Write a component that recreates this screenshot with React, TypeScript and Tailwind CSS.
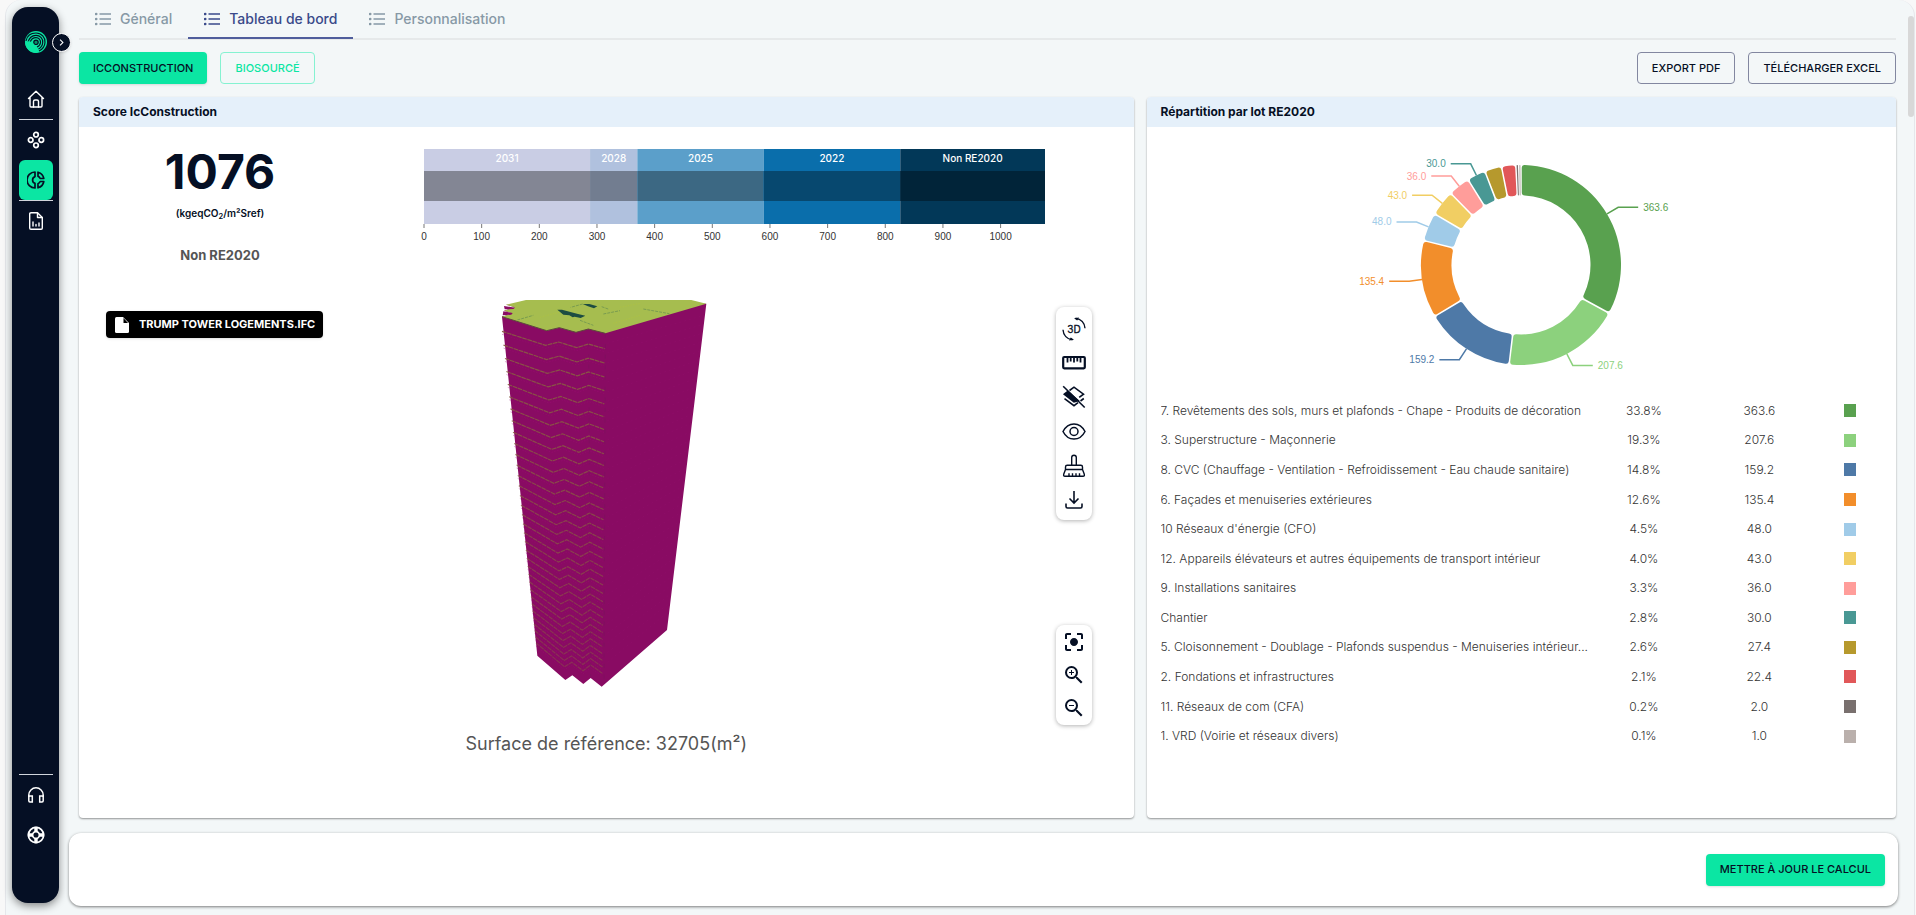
/**
 * Carbon dashboard - IcConstruction score, model viewer and RE2020 breakdown
 */

import { ReactNode } from 'react';
import clsx from 'clsx';
import { MdCenterFocusStrong, MdChevronRight, MdZoomIn, MdZoomOut } from 'react-icons/md';

interface Lot {
  name: string;
  percent: string;
  value: number;
  color: string;
}

const lots: Lot[] = [
  { name: '7. Revêtements des sols, murs et plafonds - Chape - Produits de décoration', percent: '33.8%', value: 363.6, color: '#59a14f' },
  { name: '3. Superstructure - Maçonnerie', percent: '19.3%', value: 207.6, color: '#8cd17d' },
  { name: '8. CVC (Chauffage - Ventilation - Refroidissement - Eau chaude sanitaire)', percent: '14.8%', value: 159.2, color: '#4e79a7' },
  { name: '6. Façades et menuiseries extérieures', percent: '12.6%', value: 135.4, color: '#f28e2b' },
  { name: "10 Réseaux d'énergie (CFO)", percent: '4.5%', value: 48, color: '#a0cbe8' },
  { name: '12. Appareils élévateurs et autres équipements de transport intérieur', percent: '4.0%', value: 43, color: '#f1ce63' },
  { name: '9. Installations sanitaires', percent: '3.3%', value: 36, color: '#ff9d9a' },
  { name: 'Chantier', percent: '2.8%', value: 30, color: '#499894' },
  { name: '5. Cloisonnement - Doublage - Plafonds suspendus - Menuiseries intérieur...', percent: '2.6%', value: 27.4, color: '#b6992d' },
  { name: '2. Fondations et infrastructures', percent: '2.1%', value: 22.4, color: '#e15759' },
  { name: '11. Réseaux de com (CFA)', percent: '0.2%', value: 2, color: '#79706e' },
  { name: '1. VRD (Voirie et réseaux divers)', percent: '0.1%', value: 1, color: '#bab0ac' },
];

const thresholds = [
  { label: '2031', from: 0, to: 288, color: '#c9cde4', dark: '#838694' },
  { label: '2028', from: 288, to: 370, color: '#b0c1de', dark: '#727d90' },
  { label: '2025', from: 370, to: 589, color: '#5b9fca', dark: '#3c6883' },
  { label: '2022', from: 589, to: 826, color: '#0a6eab', dark: '#07486f' },
  { label: 'Non RE2020', from: 826, to: 1077, color: '#023858', dark: '#012439' },
];

const ticks = [0, 100, 200, 300, 400, 500, 600, 700, 800, 900, 1000];

// ---------- Sidebar icons ----------

function LogoIcon() {
  return (
    <svg viewBox="0 0 22 22" className="size-[22px]">
      <circle cx="11" cy="11" r="11" fill="#0be6a3" />
      <g fill="none" stroke="#050f24" strokeWidth="1.2">
        <path d="M1 10C2 5 6 2 11 2c5.500 0 9.500 4.500 9 9.500-.3 4-2.800 7-6 8.500" />
        <path d="M3 11.500C4 7 7 4.300 11 4.300c4 0 7 3.200 6.700 7.200-.2 3-2 5.300-4.200 6.500" />
        <path d="M5 11.500C6 8.500 8 6.700 11 6.700c2.800 0 4.700 2.100 4.500 4.800-.2 2-1.500 3.700-3.500 4.500" />
        <circle cx="11" cy="11.300" r="2.200" fill="#0a8f6a" />
      </g>
      <path d="M.2 12c2.500-2.500 5.800-2 7.800.3 2 2.400 4.800 3.700 4.500 9.500C6 22.500.7 18 .2 12z" fill="#0be6a3" />
    </svg>
  );
}

function HomeIcon() {
  return (
    <svg viewBox="0 0 18 18" className="size-[18px]" fill="none" stroke="currentColor" strokeWidth="1.4" strokeLinejoin="round" strokeLinecap="round">
      <path d="M1.500 8.500 9 1.200l7.500 7.300M3 7.500V16q0 1 1 1h10q1 0 1-1V7.500" />
      <path d="M6.500 17v-5.500q0-1.500 1.500-1.500h2q1.500 0 1.500 1.500V17" />
    </svg>
  );
}

function ComponentsIcon() {
  return (
    <svg viewBox="0 0 18 18" className="size-[18px]" fill="none" stroke="currentColor" strokeWidth="1.700">
      <circle cx="9" cy="3.700" r="2.300" />
      <circle cx="3.700" cy="9" r="2.300" />
      <circle cx="14.300" cy="9" r="2.300" />
      <circle cx="9" cy="14.300" r="2.300" />
    </svg>
  );
}

function DonutIcon() {
  return (
    <svg viewBox="0 0 18 18" className="size-[18px]" fill="none" stroke="currentColor" strokeWidth="1.700" strokeLinejoin="round">
      <path d="M8 1v4.600a3.600 3.600 0 0 0 0 6.800V17A8 8 0 0 1 8 1z" />
      <path d="M11 1.200A8 8 0 0 1 16.800 7.500h-3.600A4.500 4.500 0 0 0 11 5.300z" />
      <path d="M11 16.800a8 8 0 0 0 5.800-6.300h-3.600a4.500 4.500 0 0 1-2.200 2.200z" />
    </svg>
  );
}

function ReportIcon() {
  return (
    <svg viewBox="0 0 18 18" className="size-[18px]" fill="none" stroke="currentColor" strokeWidth="1.400" strokeLinejoin="round" strokeLinecap="round">
      <path d="M4 .8h6.500L15.300 5.500V16q0 1.200-1.200 1.200H4q-1.300 0-1.300-1.200V2Q2.700.8 4 .8z" />
      <path d="M10.500 1v4.500h4.600M6 10v4M9 12.500V14M12 11v3" />
    </svg>
  );
}

function HeadsetIcon() {
  return (
    <svg viewBox="0 0 18 18" className="size-[18px]" fill="none" stroke="currentColor" strokeWidth="1.500">
      <path d="M1.800 11V9a7.200 7.200 0 0 1 14.400 0v2" />
      <path d="M1.800 10h3.500v6H3q-1.200 0-1.200-1.200zM16.200 10h-3.500v6H15q1.200 0 1.200-1.200z" />
    </svg>
  );
}

function SupportIcon() {
  return (
    <svg viewBox="0 0 18 18" className="size-[18px]" fill="none" stroke="currentColor">
      <circle cx="9" cy="9" r="7.600" strokeWidth="1.800" />
      <circle cx="9" cy="9" r="3.400" strokeWidth="1.700" />
      <path d="M9 .8v5M9 12.200v5M.8 9h5M12.200 9h5" strokeWidth="3.400" />
    </svg>
  );
}

// ---------- Viewer icons ----------

function RotateIcon() {
  return (
    <svg viewBox="0 0 24 24" className="size-6" fill="none" stroke="#050f24" strokeWidth="1.400">
      <path d="M13.500 1.200C19 2 22.700 6 23 11.300M10.500 22.800C5 22 1.300 18 1 12.700" />
      <path d="m12 1.200 5-.6-1.800 3zM12 22.800l-5 .6 1.800-3z" fill="#050f24" stroke="none" />
      <text x="12" y="16" textAnchor="middle" fontSize="10" fill="#050f24" stroke="#050f24" strokeWidth=".3">3D</text>
    </svg>
  );
}

function RulerIcon() {
  return (
    <svg viewBox="0 0 24 24" className="size-6" fill="none" stroke="#050f24" strokeWidth="1.800">
      <rect x="1.200" y="6" width="21.600" height="11.300" rx="1" strokeWidth="2.200" />
      <path d="M5.500 6v5.500M8.700 6v4.500M12 6v5.500M15.300 6v4.500M18.500 6v5.500" />
    </svg>
  );
}

function LayersOffIcon() {
  return (
    <svg viewBox="0 0 24 24" className="size-6" fill="none" stroke="#050f24" strokeWidth="1.600">
      <path d="m7.500 5.500 4.500-3.300 9.500 7-4.300 3.200M2.500 13.700 12 20.700l4-3M18.500 16l3.300-2.500" />
      <path d="m2.300 9.200 3.400-2.600 10.500 9-4.200 1.200z" fill="#050f24" />
      <path d="m1.200 1.200 21.500 21.300" />
    </svg>
  );
}

function EyeIcon() {
  return (
    <svg viewBox="0 0 24 24" className="size-6" fill="none" stroke="#050f24" strokeWidth="1.500">
      <path d="M1 12.500c2.500-4.900 6.300-7.600 11-7.600s8.500 2.700 11 7.600c-2.500 4.900-6.300 7.600-11 7.600S3.500 17.400 1 12.500z" />
      <circle cx="12" cy="12.500" r="4" />
    </svg>
  );
}

function BroomIcon() {
  return (
    <svg viewBox="0 0 24 24" className="size-6" fill="none" stroke="#050f24" strokeWidth="1.400" strokeLinejoin="round">
      <path d="M9.700 12V4.500a2.300 2.300 0 0 1 4.600 0V12" />
      <path d="M3.500 16.500V14q0-1.700 1.700-1.700h13.600q1.700 0 1.700 1.700v2.500zM3.500 16.500 1.700 21.300q-.4 2 1.300 2h18q1.700 0 1.300-2l-1.800-4.800" />
      <path d="M7 23.300v-3M10.500 23.300v-3M14 23.300v-3M17.500 23.300v-3" />
    </svg>
  );
}

function DownloadIcon() {
  return (
    <svg viewBox="0 0 24 24" className="size-6" fill="none" stroke="#050f24" strokeWidth="1.600">
      <path d="M12 4v12M7.500 11.500l4.500 4.500 4.500-4.500M4 16.500v3Q4 21 5.500 21h13q1.500 0 1.500-1.500v-3" />
    </svg>
  );
}

function ListIcon() {
  return (
    <svg viewBox="0 0 16 14" className="h-[14px] w-4" stroke="currentColor" strokeWidth="1.300" fill="currentColor">
      <path d="M4.500 2H16M4.500 7H16M4.500 12H16" />
      <circle cx="1.200" cy="2" r=".7" />
      <circle cx="1.200" cy="7" r=".7" />
      <circle cx="1.200" cy="12" r=".7" />
    </svg>
  );
}

// ---------- Layout pieces ----------

function NavItem({ label, active, children }: { label: string; active?: boolean; children: ReactNode }) {
  return (
    <a
      href="#"
      aria-label={label}
      className={clsx(
        'flex h-10 w-[34px] items-center justify-center rounded-md',
        active ? 'bg-[#0be6a3] text-[#050f24]' : 'text-white'
      )}
    >
      {children}
    </a>
  );
}

function Sidebar() {
  return (
    <aside className="relative mt-[7px] mb-3 flex w-[47px] shrink-0 flex-col items-center rounded-2xl bg-[#050f24] pt-6 pb-12 shadow-[0_3px_8px_rgba(0,0,0,0.45)]">
      <LogoIcon />
      <button
        aria-label="Ouvrir le menu"
        className="absolute top-[26px] -right-3 flex size-[19px] items-center justify-center rounded-full border border-white bg-[#050f24] text-white shadow"
      >
        <MdChevronRight size={13} />
      </button>
      <nav className="mt-5 flex flex-1 flex-col items-center">
        <div className="border-b border-gray-300 pt-[6px]">
          <NavItem label="Accueil"><HomeIcon /></NavItem>
        </div>
        <NavItem label="Composants"><ComponentsIcon /></NavItem>
        <div className="border-b border-gray-300">
          <NavItem label="Tableau de bord" active><DonutIcon /></NavItem>
        </div>
        <NavItem label="Rapport"><ReportIcon /></NavItem>
        <div className="mt-auto border-t border-gray-300">
          <NavItem label="Assistance"><HeadsetIcon /></NavItem>
          <NavItem label="Aide"><SupportIcon /></NavItem>
        </div>
      </nav>
    </aside>
  );
}

function Tab({ label, active }: { label: string; active?: boolean }) {
  return (
    <button
      role="tab"
      aria-selected={!!active}
      className={clsx(
        '-mb-[2px] flex h-[39px] items-center gap-[9px] border-b-2 px-4 text-sm font-medium',
        active ? 'border-[#4f5d9c] text-[#3a4a8a]' : 'border-transparent text-[#8799a6]'
      )}
    >
      <ListIcon />
      {label}
    </button>
  );
}

function Card({ title, className, children }: { title: string; className?: string; children: ReactNode }) {
  return (
    <section className={clsx('flex flex-col overflow-hidden rounded bg-white shadow-[0_1px_2px_rgba(0,0,0,0.4)]', className)}>
      <h2 className="h-[30px] bg-[#e5f0fa] px-[14px] text-xs leading-[30px] font-bold text-[#050f24]">{title}</h2>
      {children}
    </section>
  );
}

function ThresholdChart() {
  const x = (v: number) => 10 + v * 0.5766;

  return (
    <svg viewBox="0 0 641 100" className="h-[100px] w-[641px] shrink-0">
      {thresholds.map((t) => (
        <g key={t.label}>
          <rect x={x(t.from)} y="0" width={x(t.to) - x(t.from)} height="75" fill={t.color} />
          <rect x={x(t.from)} y="22" width={x(t.to) - x(t.from)} height="30" fill={t.dark} />
          <text x={x((t.from + t.to) / 2)} y="13" textAnchor="middle" fontSize="10" fontWeight="500" fill="#fff">
            {t.label}
          </text>
        </g>
      ))}
      {ticks.map((t) => (
        <g key={t}>
          <path d={`M${x(t)} 75v4`} stroke="#777" />
          <text x={x(t)} y="91" textAnchor="middle" className="font-['Liberation_Sans',sans-serif]" fontSize="10" fill="#333">
            {t}
          </text>
        </g>
      ))}
    </svg>
  );
}

// Floor lines of the tower: start on the roof edge, get closer towards the ground
const topEdge = [[66, 154], [197, 196], [236, 186], [290, 203], [325, 192], [374, 206]];
const bottomEdge = [[172, 1127], [256, 1200], [277, 1186], [310, 1212], [332, 1194], [367, 1220]];

const floors = Array.from({ length: 34 }, (_, i) => {
  const s = (43 * (1 - Math.pow(0.975, i))) / 0.025 / 1014;
  return topEdge
    .map(([x, y], k) => `${(x + (bottomEdge[k][0] - x) * s).toFixed(1)},${(y + (bottomEdge[k][1] - y) * s).toFixed(1)}`)
    .join(' ');
});

function Tower() {
  return (
    <svg viewBox="60 60 624 1164" className="mx-auto h-[388px] w-[208px]">
      <path
        d="M78 74 105 82 72 92 98 100 66 110 172 1127 256 1200 277 1186 310 1212 332 1194 365 1220 561 1050 679 71z"
        fill="#890b63"
      />
      <path d="M78 74 138 60H634L679 71 376 160 325 147 288 157 238 143 200 152 66 110 98 100 72 92 105 82z" fill="#a6bd4f" />
      <path d="M72 78 105 83 100 87 74 88zM70 94 98 99 94 104 68 106z" fill="#890b63" />
      <path d="M66 110 200 152l38-9 50 14 37-10 51 13" fill="none" stroke="#5d4a3c" strokeWidth="3" />
      <g fill="#1d4c42">
        <path d="m232 89 14 0 48 13 22 5-14 7-18-4-6 2-10-6-18-2zM308 72l20 0 24 7-10 6-18-6z" />
      </g>
      <path d="m308 72-36 10M490 87l78 14M365 80l22 8M370 102l50-10M112 120l48-14M300 121l40 15" fill="none" stroke="#4c7a50" strokeWidth="1.500" strokeDasharray="9 3" />
      <path d="m420 82 60-12M180 112l60-16M400 130l80-24" fill="none" stroke="#b9c930" strokeWidth="1" strokeDasharray="4 4" />
      {floors.map((points, i) => (
        <g key={points} fill="none">
          <polyline points={points} stroke="#895a43" strokeWidth="3.500" strokeDasharray="14 2" opacity={0.95 - i * 0.014} />
          <polyline points={points} stroke="#a00878" strokeWidth="1.500" strokeDasharray="5 4" transform="translate(0 9)" opacity=".7" />
        </g>
      ))}
      {floors.map((_, i) => (
        <path
          key={i}
          d={`M382 ${190 + i * 29}L${672 - i * 3.3} ${106 + i * 27}`}
          stroke="#9b1275"
          strokeWidth="1.200"
          strokeDasharray="6 9"
          opacity=".6"
        />
      ))}
      <path d="M376 160 372 1210M326 190l6 1000" fill="none" stroke="#6d1a56" strokeWidth="1.500" strokeDasharray="12 20" opacity=".7" />
    </svg>
  );
}

function ToolButton({ label, children }: { label: string; children: ReactNode }) {
  return (
    <button aria-label={label} className="flex size-6 items-center justify-center text-[#050f24]">
      {children}
    </button>
  );
}

function ScoreCard() {
  return (
    <Card title="Score IcConstruction" className="col-span-7">
      <div className="flex h-[173px]">
        <div className="flex w-[282px] shrink-0 flex-col items-center pt-5 text-[#050f24]">
          <p className="text-5xl leading-[50px] font-bold">1076</p>
          <p className="mt-2 text-[10px] leading-4 font-semibold">
            (kgeqCO<sub>2</sub>/m²Sref)
          </p>
          <p className="mt-6 text-[13px] leading-5 font-bold text-[#555]">Non RE2020</p>
        </div>
        <div className="flex flex-1 pt-[22px] pl-[53px]">
          <ThresholdChart />
        </div>
      </div>

      {/* 3D viewer */}
      <div className="relative h-[425px] pr-1">
        <Tower />
        <button className="absolute top-[11px] left-[27px] flex h-[27px] items-center gap-[9px] rounded bg-black px-2 text-[11px] font-bold text-white shadow">
          <svg viewBox="0 0 16 18" className="h-[18px] w-4">
            <path d="M1 2.500Q1 1 2.500 1H9l6 6v8.500q0 1.500-1.500 1.500h-11Q1 17 1 15.500z" fill="#fff" />
            <path d="M9.500 2v5H14z" fill="#000" />
          </svg>
          TRUMP TOWER LOGEMENTS.IFC
        </button>
        <div className="absolute top-[7px] right-[42px] flex flex-col gap-[10px] rounded-lg bg-white px-[6px] pt-[10px] pb-[9px] shadow-[0_1px_4px_rgba(0,0,0,0.3)]">
          <ToolButton label="Rotation 3D"><RotateIcon /></ToolButton>
          <ToolButton label="Mesurer"><RulerIcon /></ToolButton>
          <ToolButton label="Masquer les calques"><LayersOffIcon /></ToolButton>
          <ToolButton label="Afficher"><EyeIcon /></ToolButton>
          <ToolButton label="Nettoyer"><BroomIcon /></ToolButton>
          <ToolButton label="Télécharger"><DownloadIcon /></ToolButton>
        </div>
        <div className="absolute right-[42px] bottom-0 flex flex-col gap-[9px] rounded-lg bg-white px-[6px] py-[5px] shadow-[0_1px_4px_rgba(0,0,0,0.3)]">
          <ToolButton label="Recentrer"><MdCenterFocusStrong size={24} /></ToolButton>
          <ToolButton label="Zoom avant"><MdZoomIn size={24} /></ToolButton>
          <ToolButton label="Zoom arrière"><MdZoomOut size={24} /></ToolButton>
        </div>
      </div>
      <p className="pt-[7px] pb-[62px] text-center text-lg leading-6 text-[#555]">Surface de référence: 32705(m²)</p>
    </Card>
  );
}

// ---------- Donut ----------

const OUTER = 100;
const INNER = 69.5;
const PAD = Math.PI / 180;

const point = (r: number, a: number) => `${(r * Math.sin(a)).toFixed(2)} ${(-r * Math.cos(a)).toFixed(2)}`;

function slicePath(start: number, end: number) {
  const mid = (start + end) / 2;
  const o0 = Math.min(start + 0.0075, mid - 0.006);
  const o1 = Math.max(end - 0.0075, mid + 0.006);
  const i0 = Math.min(start + 0.011, mid - 0.007);
  const i1 = Math.max(end - 0.011, mid + 0.007);
  const c = Math.min(3, ((o1 - o0) * OUTER) / 3);
  const large = end - start > Math.PI ? 1 : 0;
  return [
    `M${point(OUTER - c, o0)}`,
    `Q${point(OUTER, o0)} ${point(OUTER, o0 + c / OUTER)}`,
    `A${OUTER} ${OUTER} 0 ${large} 1 ${point(OUTER, o1 - c / OUTER)}`,
    `Q${point(OUTER, o1)} ${point(OUTER - c, o1)}`,
    `L${point(INNER + c, i1)}`,
    `Q${point(INNER, i1)} ${point(INNER, i1 - c / INNER)}`,
    `A${INNER} ${INNER} 0 ${large} 0 ${point(INNER, i0 + c / INNER)}`,
    `Q${point(INNER, i0)} ${point(INNER + c, i0)}`,
    'Z',
  ].join(' ');
}

function DonutChart() {
  const total = lots.reduce((sum, lot) => sum + lot.value, 0);
  const k = (2 * Math.PI - lots.length * PAD) / total;
  let angle = 0;

  return (
    <svg viewBox="-180 -115 360 230" className="mx-auto h-[230px] w-[360px]">
      {lots.map((lot) => {
        const start = angle;
        const end = start + lot.value * k + PAD;
        angle = end;
        const mid = (start + end) / 2;
        const dir = mid < Math.PI ? 1 : -1;
        const x = 113 * Math.sin(mid);
        const y = -113 * Math.cos(mid);
        return (
          <g key={lot.name}>
            <path d={slicePath(start, end)} fill={lot.color} />
            {lot.value >= 30 && (
              <>
                <path d={`M${point(OUTER, mid)} L${x} ${y} h${dir * 20}`} fill="none" stroke={lot.color} strokeWidth="1.500" />
                <text
                  x={x + dir * 25}
                  y={y + 3.500}
                  textAnchor={dir > 0 ? 'start' : 'end'}
                  className="font-['Liberation_Sans',sans-serif]"
                  fontSize="10"
                  fill={lot.color}
                >
                  {lot.value.toFixed(1)}
                </text>
              </>
            )}
          </g>
        );
      })}
    </svg>
  );
}

function BreakdownCard() {
  return (
    <Card title="Répartition par lot RE2020" className="col-span-5">
      <div className="pt-[23px]">
        <DonutChart />
      </div>
      <div className="px-[14px] pt-4">
        <table className="h-[355px] w-full table-fixed text-xs font-light text-[#333]">
          <tbody>
            {lots.map((lot) => (
              <tr key={lot.name}>
                <td className="w-[60%] truncate">{lot.name}</td>
                <td className="w-[14%] text-center">{lot.percent}</td>
                <td className="w-[18%] text-center">{lot.value.toFixed(1)}</td>
                <td>
                  <span className="ml-5 block h-[13px] w-3" style={{ backgroundColor: lot.color }} />
                </td>
              </tr>
            ))}
          </tbody>
        </table>
      </div>
    </Card>
  );
}

const buttonBase = 'h-8 rounded px-[14px] text-[11px] font-medium';

export default function App() {
  return (
    <div className="min-h-screen bg-[#f8f8f8] pr-px pl-[5px] font-['Inter',sans-serif]">
      <div className="relative flex min-h-screen rounded-t-2xl border-x border-gray-200 bg-[#f3f7f8] pl-[6px]">
        <Sidebar />

        <main className="ml-[10px] flex min-w-0 flex-1 flex-col pr-4 pb-[9px]">
          <div className="flex-1 pr-[2px] pl-[10px]">
            <div role="tablist" className="flex h-10 border-b-2 border-[#e6e9ea]">
              <Tab label="Général" />
              <Tab label="Tableau de bord" active />
              <Tab label="Personnalisation" />
            </div>

            <div className="mt-3 flex items-center gap-[13px]">
              <button className={clsx(buttonBase, 'bg-[#0be6a3] text-[#050f24] shadow')}>ICCONSTRUCTION</button>
              <button className={clsx(buttonBase, 'border border-[#85f2d1] text-[#0be6a3]')}>BIOSOURCÉ</button>
              <button className={clsx(buttonBase, 'ml-auto border border-[#8287a0] text-[#050f24]')}>EXPORT PDF</button>
              <button className={clsx(buttonBase, 'border border-[#8287a0] text-[#050f24]')}>TÉLÉCHARGER EXCEL</button>
            </div>

            <div className="mt-[13px] grid grid-cols-12 gap-[13px]">
              <ScoreCard />
              <BreakdownCard />
            </div>
          </div>

          <footer className="mt-[15px] flex h-[73px] items-center justify-end rounded-xl bg-white px-[13px] shadow-[0_1px_3px_rgba(0,0,0,0.5)]">
            <button className={clsx(buttonBase, 'bg-[#0be6a3] text-[#050f24] shadow')}>METTRE À JOUR LE CALCUL</button>
          </footer>
        </main>

        {/* Scroll thumb */}
        <div className="absolute top-4 right-0 h-[101px] w-[6px] rounded-full bg-[#d8d8d8]" />
      </div>
    </div>
  );
}
